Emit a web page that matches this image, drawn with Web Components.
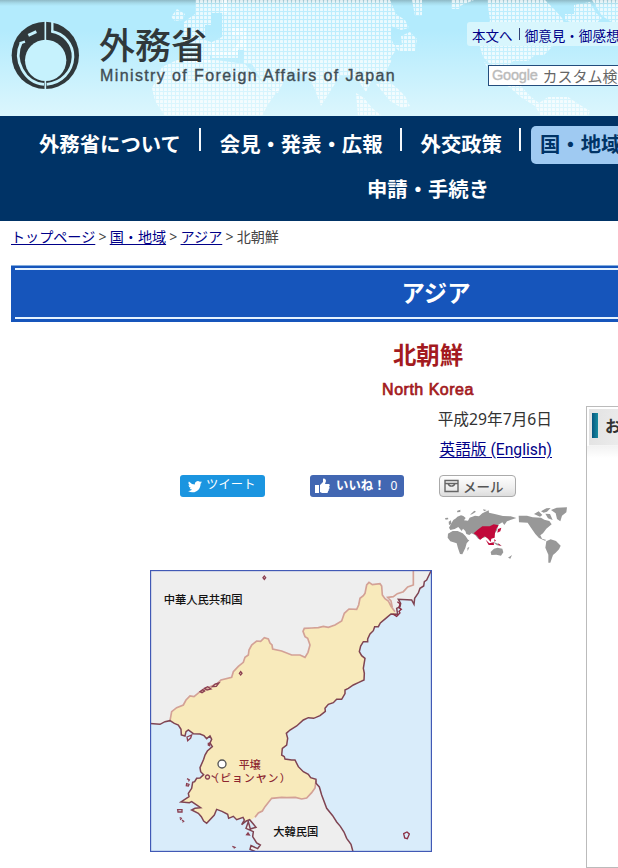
<!DOCTYPE html>
<html lang="ja"><head><meta charset="utf-8"><title>北朝鮮 | 外務省</title>
<style>
html,body{margin:0;padding:0;background:#fff;overflow:hidden}
body{width:618px;height:868px;font-family:"Noto Sans","Noto Sans CJK JP",sans-serif;color:#333}
</style></head><body><mofa-page></mofa-page>
<script>
const define=(name,html)=>customElements.define(name,class extends HTMLElement{
 constructor(){super();this.attachShadow({mode:'open'}).innerHTML=html;}
});

define('mofa-emblem',`<style>:host{display:block;width:69px;height:69px}svg{display:block}</style>
<svg width="69" height="69" viewBox="33 64 207 207">
<circle cx="136" cy="167" r="101" fill="#30383b"/><circle cx="137" cy="182" r="62" fill="#c6f2fd"/>
<g fill="none" stroke="#c6f2fd"><path d="M157 62V97" stroke-width="7"/><path d="M154 95C192 101 220 133 219 172C217 216 184 251 140 254" stroke-width="8"/>
<path d="M64 128C38 181 73 249 132 254" stroke-width="8"/><path d="M136 62V121M136 243V272" stroke-width="5"/>
<path d="M85 107L109 96" stroke-width="9"/><path d="M59 131L75 126" stroke-width="7"/></g></svg>`);

define('dot-world',`<style>:host{display:block;height:116px;width:856px}svg{display:block}</style>
<svg width="856" height="116"><defs><pattern id="d" width="4" height="4" patternUnits="userSpaceOnUse"><rect width="4" height="4" fill="#fff" opacity=".12"/><rect width="3" height="3" rx=".6" fill="#fff" opacity=".7"/></pattern></defs>
<g fill="url(#d)"><path d="M195 0H228V13H211V25H205V40L214 43V51H232L243 36H232V28H246V50H238V55H210V62H190L179 58V49H190L194 43H184V22L195 14Z"/>
<path d="M171 17L177 9 185 14 183 20 175 21Z"/>
<path d="M222 0H390L396 14 405 20 409 28 401 30 391 26V38L396 50 389 60H392L384 75 372 80 366 92 359 82 352 76H340L331 90 321 106 315 90 309 77 298 73H288L278 93 265 86 252 64H244V48H238V58H212V42L222 37Z"/>
<path d="M162 67L177 60H216L245 64 255 75 270 90H278L267 106 262 116H165L155 101 152 88Z"/>
<path d="M401 36L410 32 417 39 415 51 399 51 393 45H402Z"/><path d="M356 93L364 98 372 108 382 116H358ZM376 84L387 80 397 88 405 96 410 106 402 108 390 101Z"/>
<path d="M451 0H474L460 6V9H451ZM412 0H422V16H415Z"/><path d="M487 0H545L555 10 562 18 566 25 557 38 552 47 544 55H535L528 61H513L507 68 493 67 483 57 479 44 487 37 490 20Z"/><path d="M574 5L590 2 596 13 602 18 594 25 582 26 565 20V14H574ZM592 0H618V22H612L602 16Z"/>
<path d="M484 62L498 69 507 80 521 86 530 96 539 103 548 97H568L580 105 590 111 588 116H541L535 106 522 98 509 87 494 78Z"/></g></svg>`);

define('site-header',`<style>:host{display:grid;height:116px;background:linear-gradient(#8fb9c6 0,#a5d9e8 3px,#b3ebfd 6px,#b3ebfd 30px,#dbf6fd 115px,#dbf6fd);overflow:hidden}
:host>*{grid-area:1/1}
.row{display:flex;padding:21px 0 0 11px}.names{display:grid;grid-template-rows:44px 22px;padding:0 0 0 19px;width:371px;white-space:nowrap}
.jp{font:500 36px/44px "Noto Sans CJK JP";color:#30383b}.en{font:16px/22px "Liberation Sans";letter-spacing:1.39px;color:#3f4d54;-webkit-text-stroke:.35px #3f4d54;padding-left:1px}
.side{display:flex;flex-direction:column;white-space:nowrap;flex:none;width:340px}
.links{display:flex;margin-top:1px;margin-left:-3px;height:24px;background:#d8f6fd;border-radius:3px;padding-left:5px;font:13.55px/26px "Noto Sans CJK JP";color:#008}
.links i{width:1px;height:12px;background:#347;margin:6px 5px 0 6px}.search{display:flex;box-sizing:border-box;height:21px;margin:19px 0 0 18px;background:#fff;border:1px solid #234d7d;font:15px/19px "Noto Sans CJK JP";color:#666;padding-left:3px}
.search b{font:500 14.5px/19px "Liberation Sans";letter-spacing:-.2px;color:#bbb;-webkit-text-stroke:.4px #bbb;margin-right:5px}
</style><dot-world></dot-world><div class="row"><mofa-emblem></mofa-emblem><div class="names"><div class="jp">外務省</div><div class="en">Ministry of Foreign Affairs of Japan</div></div>
<div class="side"><div class="links"><span>本文へ</span><i></i><span>御意見・御感想</span></div><div class="search"><b>Google</b><span>カスタム検索</span></div></div></div>`);

define('nav-item',`<style>:host{display:block;height:38px;line-height:35px;box-sizing:border-box}:host([active]){background:#9fcaf2;color:#036;border-radius:5px;padding:0 9px;margin-left:10px}</style><slot></slot>`);
define('global-nav',`<style>:host{display:block;height:105px;background:#036;color:#fff;font:bold 20.35px "Noto Sans CJK JP";white-space:nowrap;overflow:hidden}
.a{display:flex;padding:10px 0 0 39px}.b{display:flex;justify-content:center;padding-top:7px}
i{width:2px;height:23px;background:#f4f7fa;margin:2px 19px 0 18px}.last{margin-right:0}</style>
<div class="a"><nav-item>外務省について</nav-item><i></i><nav-item>会見・発表・広報</nav-item><i style="margin-left:17px"></i><nav-item>外交政策</nav-item><i class="last" style="margin-left:17px"></i><nav-item active>国・地域</nav-item></div>
<div class="b"><nav-item>申請・手続き</nav-item></div>`);

define('bread-crumb',`<style>:host{display:flex;gap:3.2px;height:44px;padding-left:11px;font:14.1px/31px "Noto Sans","Noto Sans CJK JP",sans-serif;white-space:nowrap;color:#444}a{color:#008;text-decoration:underline;text-underline-offset:2px}</style><a>トップページ</a><span>&gt;</span><a>国・地域</a><span>&gt;</span><a>アジア</a><span>&gt;</span><span>北朝鮮</span>`);

define('page-banner',`<style>:host{display:block;margin-left:11px;height:57px;box-sizing:border-box;background:#1655bb;border-top:1px solid #82acdd;padding:3px 0 3px 4px;width:834px}
div{height:47px;border-top:2px solid #e5f3ff;border-bottom:2px solid #e5f3ff;margin-top:-1px;text-align:center;color:#fff;font:bold 23.4px/44px "Noto Sans CJK JP";padding-left:12px}</style><div><slot></slot></div>`);

define('share-row',`<style>:host{display:flex;height:22px;align-items:stretch;white-space:nowrap;color:#fff}
div{display:flex;border-radius:3px;box-sizing:border-box}svg{display:block;flex:none}
.t{width:85px;background:#1b95e0;font:12.3px/19px "Noto Sans CJK JP";padding-left:8px;margin-right:45px}.t span{margin-left:4px;letter-spacing:.1px}
.f{width:94px;background:#4267b2;font:bold 12.4px/21px "Noto Sans CJK JP";padding-left:4px;margin-right:35px}.f span{margin-left:6px}.f em{font:12px/22px "Noto Sans";margin-left:5px}
.m{width:77px;border:1px solid #aaa;border-radius:4px;background:linear-gradient(#fff,#eee 60%,#ddd);color:#555;font:500 13.5px/20px "Noto Sans CJK JP";padding-left:4px}.m span{margin-left:4px}</style>
<div class="t"><svg width="14" height="22" viewBox="0 0 24 36"><path transform="translate(0 7)" fill="#fff" d="M24 4.6a10 10 0 0 1-2.8.8 5 5 0 0 0 2.1-2.7 10 10 0 0 1-3.1 1.2A5 5 0 0 0 11.8 8.400A14 14 0 0 1 1.600 3.200a5 5 0 0 0 1.500 6.600A5 5 0 0 1 .9 9.200a5 5 0 0 0 4 4.900 5 5 0 0 1-2.300.1 5 5 0 0 0 4.600 3.400A10 10 0 0 1 0 19.500 14 14 0 0 0 21.500 7.100 10 10 0 0 0 24 4.600Z"/></svg><span>ツイート</span></div>
<div class="f"><svg width="16" height="22" viewBox="0 0 16 22"><path fill="#fff" d="M1 10H5V18H1ZM6 10L9 7V4C10 3 12 4 12 6L11 9H15C16 9.500 16 11 15 11.500C16 12.500 15.500 14 14.800 14C15 15 14.500 16 14 16.200C14 17.500 13.500 18 12.500 18H8L6 17Z"/></svg><span>いいね！</span><em>0</em></div>
<div class="m"><svg width="15" height="20" viewBox="0 0 15 20"><path d="M1 4.500H14V15.500H1ZM1 7.500H14M4 7.500C5 11 10 11 11 7.500" fill="none" stroke="#666" stroke-width="1.400"/></svg><span>メール</span></div>`);

define('world-thumb',`<style>:host{display:block;width:128px;height:64px}svg{display:block}</style>
<svg width="128" height="64" viewBox="40 105 384 192"><g fill="#989898">
<path d="M58 173L65 160 71 150 79 145 83 140 94 136 101 138 108 144 103 151 115 152 120 143 136 137 148 139 158 130 177 121 178 128 195 132 220 138 243 139 260 144 242 150 232 154 224 165 218 157 206 164 202 181 195 191 172 200 146 207 137 196 126 190 119 195 110 192 107 183 100 176 96 183 86 171 75 177 62 180Z"/>
<path d="M55 191L69 183 84 183 99 190 108 199 115 209 119 211 111 220 107 234 98 253 91 252 85 235 81 220 62 214 54 203ZM113 234L119 231 114 243ZM183 246L193 236 204 233 218 236 221 247 214 257 200 254 185 255ZM235 263L247 255 242 266ZM188 215L202 220 216 227 202 226Z"/>
<path d="M83 122L92 119 92 126 82 127ZM121 134L134 122 139 125 127 133ZM46 144L55 143 56 148 48 149ZM57 155L64 151 65 162 58 165ZM160 118L171 120 163 124Z"/>
<path d="M267 137L292 137 309 142 334 143 344 149 359 153 366 163 350 176 340 190 332 196 337 206 350 210 346 212 328 204 317 192 304 173 294 158 268 157Z"/>
<path d="M313 132L327 124 338 135 331 140ZM334 124L350 115 363 114 352 125 342 128ZM347 131L361 132 369 150 355 145ZM364 120L381 113 412 112 410 127 397 137 392 154 382 147 378 130ZM350 214L363 208 379 213 393 227 388 238 378 248 370 255 362 278 356 278 356 254 347 233Z"/></g>
<g fill="#c1093b"><path d="M132 190L144 179 158 169 180 169 192 163 207 166 200 176 196 188 195 203 185 206 183 216 175 206 165 199 151 210 142 197Z"/><path d="M205 177L215 173 212 184 203 188ZM168 209L179 220 192 217 193 225 177 225ZM194 207L199 212 194 215ZM205 220L216 227 207 226Z"/></g></svg>`);

define('korea-map',`<style>:host{display:block;width:282px;height:282px}svg{display:block}text{font-family:"Noto Sans CJK JP";font-weight:500}</style>
<svg width="282" height="282" viewBox="15 15 846 846"><defs>
<path id="east" d="M858 18L845 45 838 50 836 63 825 70 820 84 809 100 807 118 800 105 760 103 767 115 765 125 755 130 758 148 738 147 725 158 706 174 700 185 689 185 685 197 675 207 668 222 668 230 655 230 647 243 643 260 650 272 660 280 655 310 658 325 657 345 640 353 625 360 610 370 600 375 600 386 590 403 575 403 565 413 550 418 540 430 541 439 525 452 506 460 490 458 475 465 455 483 435 495 424 505 428 520 425 540 412 550 410 570 418 575 420 582 440 585 450 585 460 605 475 620 490 628 497 638 513 643 513 655 523 666 530 690 545 730 563 752 575 771 586 784 597 801 605 820 618 838 625 864H870V18Z"/>
<path id="west" d="M10 475L45 478 60 470 75 467 88 475 100 480 108 493 109 510 120 513 123 500 130 495 145 506 165 507 177 512 185 521 195 513 200 523 195 534 202 545 187 558 180 570 176 583 165 608 167 620 176 629 165 639 155 640 149 650 143 652 140 670 130 685 132 695 108 711 133 713 140 710 160 723 167 728 150 730 140 735 160 745 169 755 176 768 185 775 208 750 215 733 231 739 248 748 251 760 265 754 275 764 294 757 298 765 290 779 304 768 314 764 325 777 333 787 316 792 310 770 303 790 325 800 323 815 335 834 346 840 338 851 318 842 315 853 338 863H10Z"/></defs>
<rect x="15" y="15" width="846" height="846" fill="#eee"/>
<path fill="#f8eabb" d="M75 467L80 440 95 428 115 420 123 405 135 393 147 395 165 380 185 370 215 357 228 345 260 337 265 320 280 304 295 292 300 277 310 270 312 255 320 240 335 228 347 229 358 218 370 222 375 234 381 240 383 252 410 258 440 270 465 270 480 277 489 262 495 240 488 220 480 215 474 199 478 190 500 189 520 188 535 184 550 187 570 180 590 168 598 145 612 132 635 133 641 120 645 100 655 92 660 85 665 60 672 52 682 59 705 56 710 63 712 90 720 101 730 108 738 124 750 140 758 150L758 360 541 470 450 585 513 647 510 669 500 683 485 699 470 702 451 697 425 698 410 697 380 700 360 725 352 738 340 744 330 757 280 790 100 790V500Z"/>
<g fill="#d9ecfa"><use href="#east"/><use href="#west"/></g>
<path fill="none" stroke="#d3a196" stroke-width="5" d="M75 467L80 440 95 428 115 420 123 405 135 393 147 395 165 380 185 370 215 357 228 345 260 337 265 320 280 304 295 292 300 277 310 270 312 255 320 240 335 228 347 229 358 218 370 222 375 234 381 240 383 252 410 258 440 270 465 270 480 277 489 262 495 240 488 220 480 215 474 199 478 190 500 189 520 188 535 184 550 187 570 180 590 168 598 145 612 132 635 133 641 120 645 100 655 92 660 85 665 60 672 52 682 59 705 56 710 63 712 90 720 101 730 108 738 124 750 140M805 18V60L788 66 775 80 757 86 745 95 728 97 738 108 742 128M330 757L340 744 352 738 360 725 380 700 410 697 425 698 451 697 470 702 485 699 500 683 510 669 513 647"/>
<g fill="none" stroke="#7f4452" stroke-width="4.500"><use href="#east"/><use href="#west"/></g>
<g fill="none"><path stroke="#8b4052" stroke-width="4" stroke-linejoin="miter" d="M354 38l4-5 4 5-4 5zM283 325l4-5 4 5-4 5zM165 380l8-6 6 4-8 5zM178 370l10-5 10 7-12 3zM202 365l8-8 12-3-8 10zM126 516l14-6-3 9-9 8zM190 535l4-1v8l-4-2zM187 630a6 6 0 1 0 1 0zM200 632l12 7M126 641l7 4-3 4M125 656l7 2-2 5-6-1zM98 734h13v7H99zM104 758l5 2-3 5M111 765l5 4-4 3M262 844l8 3-4 3M305 809l4-5 4 6z"/>
<path stroke="#8b3045" stroke-width="4" d="M757 110l8 6-3 12 7 5-7 6 3 5-10 10-12-7M776 806l10-5 7 6-6 14-8-2z"/></g>
<circle cx="231" cy="597" r="12" fill="#fff" stroke="#555" stroke-width="4"/>
<g font-size="34" fill="#111"><text x="56" y="118" textLength="237">中華人民共和国</text><text x="385" y="814" textLength="135">大韓民国</text></g>
<g font-size="33" fill="#8c2630"><text x="281" y="613" textLength="66">平壌</text><text x="190" y="651" textLength="246" lengthAdjust="spacing" font-size="32">（ピョンヤン）</text></g>
<rect x="16.500" y="16.500" width="843" height="843" fill="none" stroke="#4159b5" stroke-width="4"/></svg>`);

define('side-panel',`<style>:host{display:block;width:258px;height:462px;box-sizing:border-box;border:1px solid #bbb;white-space:nowrap}
.h{display:flex;height:36px;margin:2px 2px 0;background:linear-gradient(100deg,#e2e2e2,#f5f5f5 70px);border-bottom:1px solid #f4f4f4;font:bold 16px/33px "Noto Sans CJK JP";color:#333}
.s{height:12px;background:linear-gradient(#f2f2f2,#fff)}i{width:6px;height:25px;margin:4px 7px 0 3px;background:linear-gradient(90deg,#065780,#188ba0)}</style><div class="h"><i></i><span>お知らせ</span></div><div class="s"></div>`);

define('mofa-page',`<style>:host{display:block;width:618px;height:868px;overflow:hidden}.page{width:856px}
.title{height:84px;box-sizing:border-box;padding-top:14px;text-align:center;color:#a31a20;font:bold 23.4px/36px "Noto Sans CJK JP"}.title div{font:16px/36px "Liberation Sans";letter-spacing:.5px;-webkit-text-stroke:.7px #a31a20}
.body{display:flex;height:462px}.main{width:586px;flex:none}.date,.eng{text-align:right;padding-right:34px;height:31px;font-size:15.7px;line-height:26px;white-space:nowrap}.eng{height:38px;line-height:25px;color:#008}.eng a{font-family:Roboto,"Noto Sans CJK JP";text-decoration:underline;text-underline-offset:2px}
share-row{padding-left:180px}world-thumb{margin:8px 0 7px 443px}korea-map{margin:-6px 0 0 150px}</style>
<div class="page"><site-header></site-header><global-nav></global-nav><bread-crumb></bread-crumb><page-banner>アジア</page-banner>
<div class="title">北朝鮮<div>North Korea</div></div>
<div class="body"><div class="main"><div class="date">平成29年7月6日</div><div class="eng"><a>英語版 (English)</a></div><share-row></share-row><world-thumb></world-thumb><korea-map></korea-map></div><side-panel></side-panel></div></div>`);
</script></body></html>
